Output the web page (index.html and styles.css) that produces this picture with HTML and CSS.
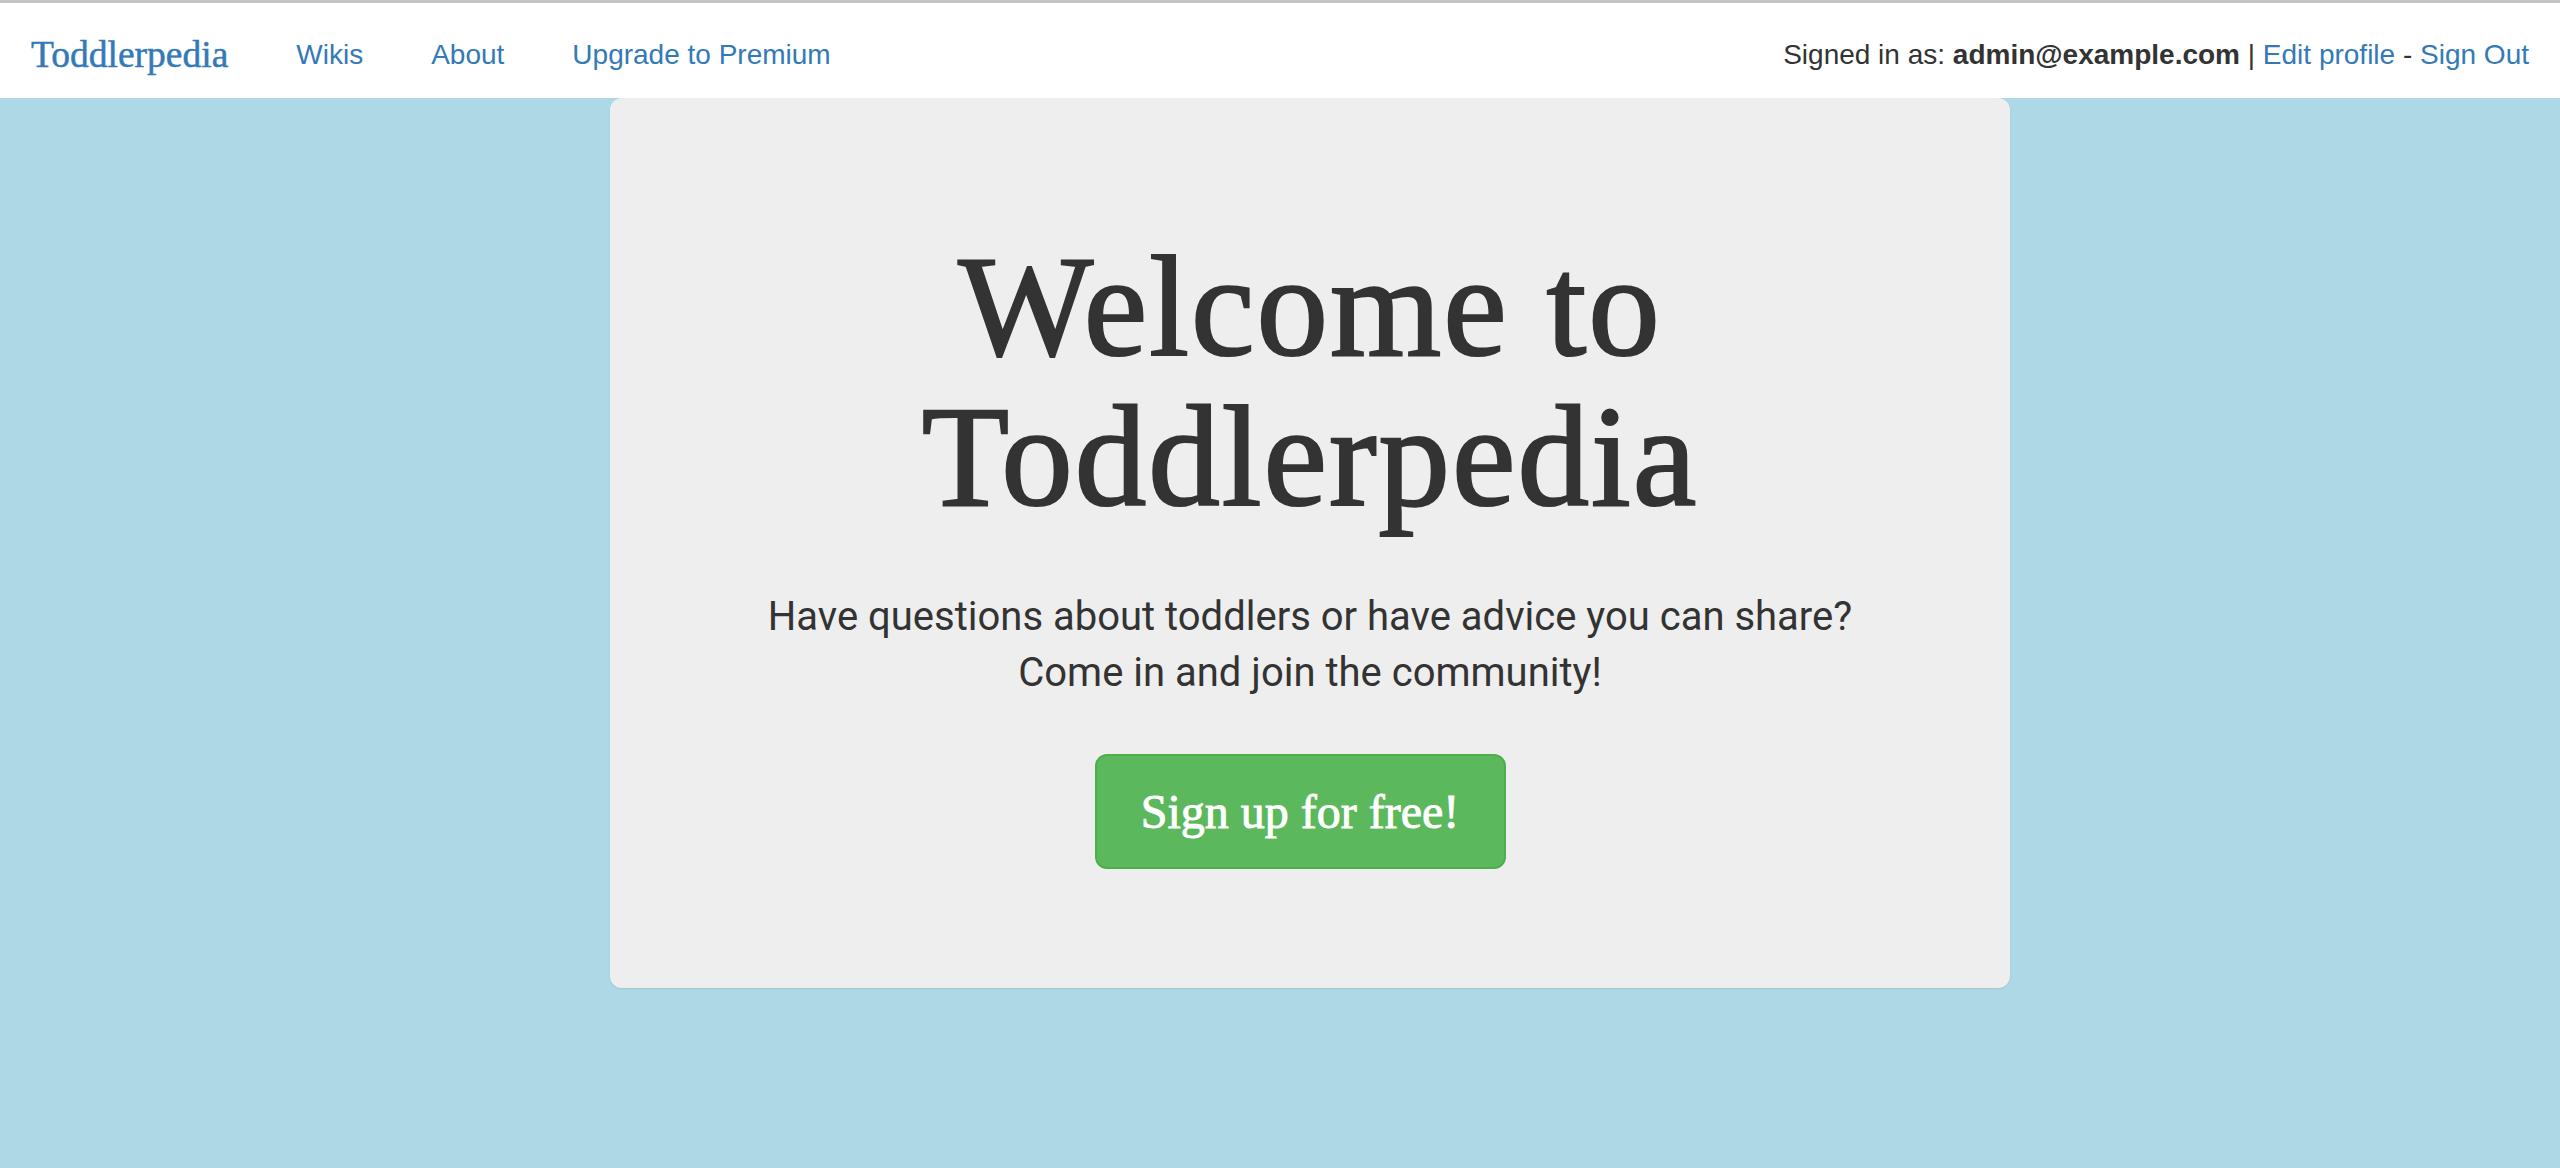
FILE: index.html
```html
<!DOCTYPE html>
<html lang="en">
<head>
<meta charset="utf-8">
<title>Toddlerpedia</title>
<link rel="stylesheet" href="styles.css">
</head>
<body>
<header class="navbar">
  <div class="nav-left">
    <a class="brand" href="#">Toddlerpedia</a>
    <nav class="nav-links">
      <a href="#">Wikis</a>
      <a href="#">About</a>
      <a href="#">Upgrade to Premium</a>
    </nav>
  </div>
  <div class="nav-right">
    Signed in as: <strong>admin@example.com</strong> | <a href="#">Edit profile</a> - <a href="#">Sign Out</a>
  </div>
</header>
<main class="page">
  <section class="jumbotron">
    <h1 class="title">Welcome to<br>Toddlerpedia</h1>
    <p class="lead">Have questions about toddlers or have advice you can share?<br>Come in and join the community!</p>
    <div class="cta-row"><a class="btn-signup" href="#">Sign up for free!</a></div>
  </section>
</main>
</body>
</html>
```

FILE: styles.css
```css
html, body {
  margin: 0;
  padding: 0;
}
body {
  background: #add8e6;
  min-height: 1168px;
  font-family: "Liberation Sans", Arial, sans-serif;
  color: #333;
}
a {
  color: #337ab7;
  text-decoration: none;
}
.navbar {
  display: flex;
  justify-content: space-between;
  align-items: center;
  box-sizing: border-box;
  height: 98px;
  padding: 8px 31px 0 31px;
  border-top: 3px solid #c4c4c4;
  background: #fff;
}
.nav-left {
  display: flex;
  align-items: center;
}
.brand {
  font-family: "Liberation Serif", "Times New Roman", serif;
  font-size: 37.5px;
  -webkit-text-stroke: 0.5px #337ab7;
  margin-right: 34px;
}
.nav-links {
  display: flex;
}
.nav-links a {
  font-size: 28px;
  padding: 0 34px;
}
.nav-right {
  font-size: 28px;
  color: #333;
}
.nav-right strong {
  font-weight: bold;
}
.page {
  padding-left: calc(50% - 670px);
}
.jumbotron {
  width: 1400px;
  box-sizing: border-box;
  background: #eeeeee;
  border-radius: 12px;
  box-shadow: 0 1px 2px rgba(0, 0, 0, 0.08);
  padding: 134px 40px 119px;
  text-align: center;
}
.title {
  margin: 0;
  font-family: "Liberation Serif", "Times New Roman", serif;
  font-weight: normal;
  font-size: 143px;
  line-height: 150px;
  letter-spacing: 2px;
  color: #333;
  -webkit-text-stroke: 2.2px #333;
}
.lead {
  margin: 57px 0 0;
  font-family: Roboto, "Noto Sans", sans-serif;
  font-size: 40px;
  line-height: 56px;
  color: #333;
}
.cta-row {
  margin-top: 53px;
}
.btn-signup {
  display: inline-flex;
  align-items: center;
  justify-content: center;
  width: 411px;
  height: 115px;
  box-sizing: border-box;
  margin-right: 20px;
  background: #5cb85c;
  border: 2px solid #4cae4c;
  border-radius: 12px;
  color: #fff;
  font-family: "Liberation Serif", "Times New Roman", serif;
  font-size: 48px;
  -webkit-text-stroke: 0.9px #fff;
}
```
